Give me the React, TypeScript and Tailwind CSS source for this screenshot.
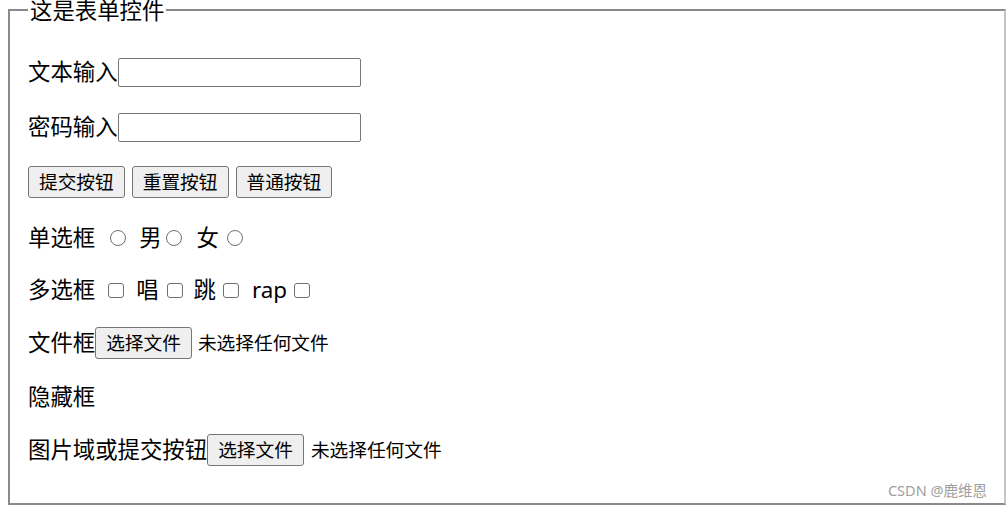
import React from "react";

const btn =
  "h-[32px] px-[10px] border border-[#767676] rounded-[3px] bg-[#efefef] text-[18.7px] leading-[24px] text-black shrink-0";
const radio =
  "inline-block shrink-0 w-[16px] h-[16px] rounded-full border-[1.5px] border-[#6f6f6f] bg-white";
const check =
  "inline-block shrink-0 w-[16px] h-[15px] rounded-[3px] border-[1.5px] border-[#6f6f6f] bg-white";

export default function App() {
  return (
    <div className="w-[1006px] h-[506px] bg-white pt-[9px] pl-[8px] font-['Noto_Sans','Noto_Sans_CJK_SC',sans-serif] text-black overflow-hidden">
      <div className="relative w-[998px] h-[496px] border-2 border-t-[#8a8a8a] border-l-[#8a8a8a] border-b-[#8a8a8a] border-r-[#c4c4c4] pl-[18px] pt-[44px]">
        <span className="absolute top-[-12px] left-[18px] bg-white px-[2px] text-[22.4px] leading-[24px]">
          这是表单控件
        </span>

        <div className="flex flex-col text-[22.4px] leading-[34px]">
          <div className="h-[34px] flex items-center">
            <span>文本输入</span>
            <input type="text" aria-label="文本输入" className="w-[243px] h-[29px] border border-[#767676] rounded-[2px] bg-white shrink-0" />
          </div>
          <div className="h-[34px] mt-[21px] flex items-center">
            <span>密码输入</span>
            <input type="password" aria-label="密码输入" className="w-[243px] h-[29px] border border-[#767676] rounded-[2px] bg-white shrink-0" />
          </div>
          <div className="h-[34px] mt-[21px] flex items-center gap-[7px]">
            <button className={btn}>提交按钮</button>
            <button className={btn}>重置按钮</button>
            <button className={btn}>普通按钮</button>
          </div>
          <div className="h-[34px] mt-[22px] flex items-center">
            <span>单选框</span>
            <span role="radio" aria-checked="false" className={`${radio} ml-[15px]`} />
            <span className="ml-[13px]">男</span>
            <span role="radio" aria-checked="false" className={`${radio} ml-[4px]`} />
            <span className="ml-[15px]">女</span>
            <span role="radio" aria-checked="false" className={`${radio} ml-[8px]`} />
          </div>
          <div className="h-[34px] mt-[18px] flex items-center">
            <span>多选框</span>
            <span role="checkbox" aria-checked="false" className={`${check} ml-[13px]`} />
            <span className="ml-[12px]">唱</span>
            <span role="checkbox" aria-checked="false" className={`${check} ml-[8px]`} />
            <span className="ml-[11px]">跳</span>
            <span role="checkbox" aria-checked="false" className={`${check} ml-[7px]`} />
            <span className="ml-[13px] w-[36px]">rap</span>
            <span role="checkbox" aria-checked="false" className={`${check} ml-[6px]`} />
          </div>
          <div className="h-[34px] mt-[19px] flex items-center">
            <span>文件框</span>
            <button className={btn}>选择文件</button>
            <span className="ml-[6px] text-[18.7px]">未选择任何文件</span>
          </div>
          <div className="h-[34px] mt-[20px] flex items-center">
            <span>隐藏框</span>
          </div>
          <div className="h-[34px] mt-[19px] flex items-center">
            <span>图片域或提交按钮</span>
            <button className={btn}>选择文件</button>
            <span className="ml-[7px] text-[18.7px]">未选择任何文件</span>
          </div>
        </div>

        <span className="absolute right-[17px] bottom-[4px] text-[14.5px] leading-[17px] text-[#a0a0a0]">
          CSDN @鹿维恩
        </span>
      </div>
    </div>
  );
}
